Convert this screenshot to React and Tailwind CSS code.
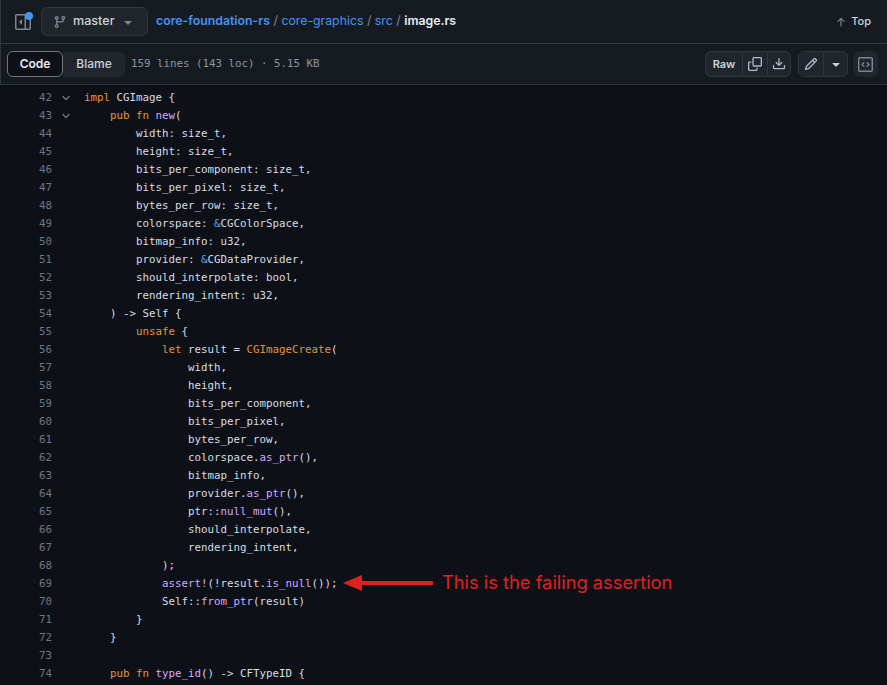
import React from "react";

const K = ({ children }) => <span className="text-[#e3913f]">{children}</span>;
const F = ({ children }) => <span className="text-[#d2a8ff]">{children}</span>;
const B = ({ children }) => <span className="text-[#58a6ff]">{children}</span>;

const lines = [
  [42, true, <><K>impl</K> CGImage {"{"}</>],
  [43, true, <>    <K>pub</K> <K>fn</K> <F>new</F>(</>],
  [44, false, "        width: size_t,"],
  [45, false, "        height: size_t,"],
  [46, false, "        bits_per_component: size_t,"],
  [47, false, "        bits_per_pixel: size_t,"],
  [48, false, "        bytes_per_row: size_t,"],
  [49, false, <>        colorspace: <B>&</B>CGColorSpace,</>],
  [50, false, "        bitmap_info: u32,"],
  [51, false, <>        provider: <B>&</B>CGDataProvider,</>],
  [52, false, "        should_interpolate: bool,"],
  [53, false, "        rendering_intent: u32,"],
  [54, false, "    ) -> Self {"],
  [55, false, <>        <K>unsafe</K> {"{"}</>],
  [56, false, <>            <K>let</K> result = <K>CGImageCreate</K>(</>],
  [57, false, "                width,"],
  [58, false, "                height,"],
  [59, false, "                bits_per_component,"],
  [60, false, "                bits_per_pixel,"],
  [61, false, "                bytes_per_row,"],
  [62, false, <>                colorspace.<F>as_ptr</F>(),</>],
  [63, false, "                bitmap_info,"],
  [64, false, <>                provider.<F>as_ptr</F>(),</>],
  [65, false, <>                ptr::<F>null_mut</F>(),</>],
  [66, false, "                should_interpolate,"],
  [67, false, "                rendering_intent,"],
  [68, false, "            );"],
  [69, false, <>            <F>assert!</F>(!result.<F>is_null</F>());</>],
  [70, false, <>            Self::<F>from_ptr</F>(result)</>],
  [71, false, "        }"],
  [72, false, "    }"],
  [73, false, ""],
  [74, false, <>    <K>pub</K> <K>fn</K> <F>type_id</F>() -&gt; CFTypeID {"{"}</>],
];

const Chevron = () => (
  <svg width="12" height="12" viewBox="0 0 16 16" fill="#7d8590">
    <path d="M12.78 5.22a.749.749 0 0 1 0 1.06l-4.25 4.25a.749.749 0 0 1-1.06 0L3.22 6.28a.749.749 0 1 1 1.06-1.06L8 8.939l3.72-3.719a.749.749 0 0 1 1.06 0Z" />
  </svg>
);

const Caret = ({ c = "#7d8590" }) => (
  <svg width="16" height="16" viewBox="0 0 16 16" fill={c}>
    <path d="m4.427 7.427 3.396 3.396a.25.25 0 0 0 .354 0l3.396-3.396A.25.25 0 0 0 11.396 7H4.604a.25.25 0 0 0-.177.427Z" />
  </svg>
);

const Ico = ({ d, c = "#c9d1d9", s = 16 }) => (
  <svg width={s} height={s} viewBox="0 0 16 16" fill={c}>
    <path d={d} />
  </svg>
);

export default function App() {
  return (
    <div className="relative h-[685px] w-[887px] overflow-hidden bg-[#0d1117] font-['Inter',sans-serif] text-[#e6edf3]">
      <div className="flex h-[44px] items-center border-b border-l border-[#30363d] bg-[#161b22] pl-[14px] pr-[16px]">
        <div className="relative mr-[10px] h-4 w-4">
          <Ico c="#7d8590" d="m4.177 7.823 2.396-2.396A.25.25 0 0 1 7 5.604v4.792a.25.25 0 0 1-.427.177L4.177 8.177a.25.25 0 0 1 0-.354Z M0 1.75C0 .784.784 0 1.75 0h12.5C15.216 0 16 .784 16 1.75v12.5A1.75 1.75 0 0 1 14.25 16H1.75A1.75 1.75 0 0 1 0 14.25Zm1.75-.25a.25.25 0 0 0-.25.25v12.5c0 .138.112.25.25.25H9.5v-13Zm12.5 13a.25.25 0 0 0 .25-.25V1.75a.25.25 0 0 0-.25-.25H11v13Z" />
          <span className="absolute right-[-2px] top-[-2px] h-[8px] w-[8px] rounded-full bg-[#4493f8]" />
        </div>
        <div className="flex h-[29px] w-[107px] items-center rounded-md border border-[#30363d] bg-[#21262d] pl-[11px]">
          <Ico c="#7d8590" s={14} d="M9.5 3.25a2.25 2.25 0 1 1 3 2.122V6A2.5 2.5 0 0 1 10 8.5H6a1 1 0 0 0-1 1v1.128a2.251 2.251 0 1 1-1.5 0V5.372a2.25 2.25 0 1 1 1.5 0v1.836A2.493 2.493 0 0 1 6 7h4a1 1 0 0 0 1-1v-.628A2.25 2.25 0 0 1 9.5 3.25Zm-6 0a.75.75 0 1 0 1.5 0 .75.75 0 0 0-1.5 0Zm8.25-.75a.75.75 0 1 0 0 1.5.75.75 0 0 0 0-1.5ZM4.25 12a.75.75 0 1 0 0 1.5.75.75 0 0 0 0-1.5Z" />
          <span className="ml-[6px] text-[12.6px] font-medium text-[#c9d1d9]">master</span>
          <span className="ml-[5px]"><Caret /></span>
        </div>
        <div className="ml-[8px] flex items-baseline gap-[3.5px] text-[12.3px] text-[#7d8590]">
          <span className="font-semibold text-[#4493f8]">core-foundation-rs</span>
          <span>/</span>
          <span className="text-[#4493f8]">core-graphics</span>
          <span>/</span>
          <span className="text-[#4493f8]">src</span>
          <span>/</span>
          <span className="font-semibold text-[#e6edf3]">image.rs</span>
        </div>
        <div className="ml-auto flex items-center gap-[4px] text-[11px] font-medium text-[#c9d1d9]">
          <Ico c="#7d8590" s={12} d="M3.47 7.78a.75.75 0 0 1 0-1.06l4-4a.75.75 0 0 1 1.06 0l4 4a.75.75 0 0 1-1.06 1.06L8.75 5.06v8.19a.75.75 0 0 1-1.5 0V5.06L4.53 7.78a.75.75 0 0 1-1.06 0Z" />
          <span>Top</span>
        </div>
      </div>

      <div className="flex h-[41px] items-center border-b border-l border-[#30363d] bg-[#161b22] pl-[6px] pr-[9px]">
        <div className="flex h-[26px] items-center">
          <div className="flex h-[26px] w-[56px] items-center justify-center rounded-md border border-[#6e7681] bg-[#0d1117] text-[12px] font-semibold">Code</div>
          <div className="flex h-[25px] w-[62px] items-center justify-center rounded-r-md bg-[#21262d] text-[12px] font-medium text-[#c9d1d9]">Blame</div>
        </div>
        <span className="ml-[6px] font-['DejaVu_Sans_Mono',monospace] text-[10.8px] text-[#8b949e]">159 lines (143 loc) · 5.15 KB</span>
        <div className="ml-auto flex items-center gap-[5px]">
          <div className="mr-[2px] flex h-[26px] items-center rounded-md border border-[#30363d] bg-[#21262d]">
            <span className="flex h-full w-[37px] items-center justify-center border-r border-[#30363d] text-[11px] font-semibold text-[#c9d1d9]">Raw</span>
            <span className="flex h-full w-[25px] items-center justify-center border-r border-[#30363d]">
              <Ico s={14} c="#adbac7" d="M0 6.75C0 5.784.784 5 1.75 5h1.5a.75.75 0 0 1 0 1.5h-1.5a.25.25 0 0 0-.25.25v7.5c0 .138.112.25.25.25h7.5a.25.25 0 0 0 .25-.25v-1.5a.75.75 0 0 1 1.5 0v1.5A1.75 1.75 0 0 1 9.25 16h-7.5A1.75 1.75 0 0 1 0 14.25Z M5 1.75C5 .784 5.784 0 6.75 0h7.5C15.216 0 16 .784 16 1.75v7.5A1.75 1.75 0 0 1 14.25 11h-7.5A1.75 1.75 0 0 1 5 9.25Zm1.75-.25a.25.25 0 0 0-.25.25v7.5c0 .138.112.25.25.25h7.5a.25.25 0 0 0 .25-.25v-7.5a.25.25 0 0 0-.25-.25Z" />
            </span>
            <span className="flex h-full w-[22px] items-center justify-center">
              <Ico s={14} c="#adbac7" d="M2.75 14A1.75 1.75 0 0 1 1 12.25v-2.5a.75.75 0 0 1 1.5 0v2.5c0 .138.112.25.25.25h10.5a.25.25 0 0 0 .25-.25v-2.5a.75.75 0 0 1 1.5 0v2.5A1.75 1.75 0 0 1 13.25 14Z M7.25 7.689V2a.75.75 0 0 1 1.5 0v5.689l1.97-1.969a.749.749 0 1 1 1.06 1.06l-3.25 3.25a.749.749 0 0 1-1.06 0L4.22 6.78a.749.749 0 1 1 1.06-1.06l1.97 1.969Z" />
            </span>
          </div>
          <div className="flex h-[26px] items-center rounded-md border border-[#30363d] bg-[#21262d]">
            <span className="flex h-full w-[25px] items-center justify-center border-r border-[#30363d]">
              <Ico s={14} c="#adbac7" d="M11.013 1.427a1.75 1.75 0 0 1 2.474 0l1.086 1.086a1.75 1.75 0 0 1 0 2.474l-8.61 8.61c-.21.21-.47.364-.756.445l-3.251.93a.75.75 0 0 1-.927-.928l.929-3.25c.081-.286.235-.547.445-.758l8.61-8.61Zm.176 4.823L9.75 4.81l-6.286 6.287a.253.253 0 0 0-.064.108l-.558 1.953 1.953-.558a.253.253 0 0 0 .108-.064Zm1.238-3.763a.25.25 0 0 0-.354 0L10.811 3.75l1.439 1.44 1.263-1.263a.25.25 0 0 0 0-.354Z" />
            </span>
            <span className="flex h-full w-[23px] items-center justify-center"><Caret c="#c9d1d9" /></span>
          </div>
          <div className="flex h-[26px] w-[25px] items-center justify-center rounded-md bg-[#21262d]">
            <Ico s={15} c="#7d8590" d="M0 1.75C0 .784.784 0 1.75 0h12.5C15.216 0 16 .784 16 1.75v12.5A1.75 1.75 0 0 1 14.25 16H1.75A1.75 1.75 0 0 1 0 14.25Zm1.75-.25a.25.25 0 0 0-.25.25v12.5c0 .138.112.25.25.25h12.5a.25.25 0 0 0 .25-.25V1.75a.25.25 0 0 0-.25-.25Zm7.47 3.97a.75.75 0 0 1 1.06 0l2 2a.75.75 0 0 1 0 1.06l-2 2a.749.749 0 1 1-1.06-1.06L10.69 8 9.22 6.53a.75.75 0 0 1 0-1.06ZM6.78 6.53 5.31 8l1.47 1.47a.749.749 0 1 1-1.06 1.06l-2-2a.75.75 0 0 1 0-1.06l2-2a.751.751 0 0 1 1.06 1.06Z" />
          </div>
        </div>
      </div>

      <div className="pt-[4px] font-['DejaVu_Sans_Mono',monospace] text-[10.8px] leading-[18px] text-[#d6dde4]">
        {lines.map(([n, fold, code]) => (
          <div key={n} className="flex h-[18px] items-center">
            <span className="w-[52px] text-right text-[#6e7681]">{n}</span>
            <span className="flex w-[32px] justify-center pr-[4px]">{fold && <Chevron />}</span>
            <span className="whitespace-pre">{code}</span>
          </div>
        ))}
      </div>

      <svg className="absolute left-[343px] top-[574px]" width="92" height="18" viewBox="0 0 92 18">
        <path d="M0 9 19 1v6h71v4H19v6Z" fill="#e0201f" />
      </svg>
      <span className="absolute left-[442px] top-[571px] text-[18.3px] leading-[22px] text-[#e0201f]">This is the failing assertion</span>
    </div>
  );
}
